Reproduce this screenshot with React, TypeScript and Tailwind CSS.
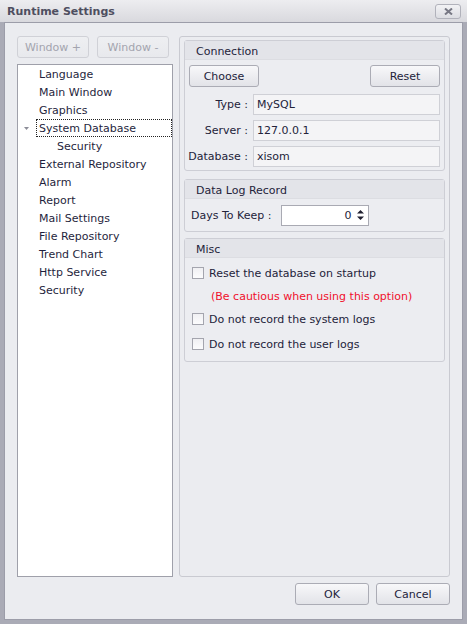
import type { ReactNode } from "react";

const font = { fontFamily: '"DejaVu Sans", "Liberation Sans", sans-serif' };

const treeItems: { label: string; depth: number; expanded?: boolean; focused?: boolean }[] = [
  { label: "Language", depth: 0 },
  { label: "Main Window", depth: 0 },
  { label: "Graphics", depth: 0 },
  { label: "System Database", depth: 0, expanded: true, focused: true },
  { label: "Security", depth: 1 },
  { label: "External Repository", depth: 0 },
  { label: "Alarm", depth: 0 },
  { label: "Report", depth: 0 },
  { label: "Mail Settings", depth: 0 },
  { label: "File Repository", depth: 0 },
  { label: "Trend Chart", depth: 0 },
  { label: "Http Service", depth: 0 },
  { label: "Security", depth: 0 },
];

function Btn({ children, disabled, className = "" }: { children: ReactNode; disabled?: boolean; className?: string }) {
  return (
    <button
      type="button"
      className={
        "flex h-[22px] items-center justify-center rounded-[3px] border bg-gradient-to-b pt-[1px] " +
        (disabled
          ? "border-[#d0d1d7] from-[#eeeff2] to-[#e8e9ed] text-[#a3a4ae] "
          : "border-[#abacb5] from-[#f8f8fa] to-[#e2e3e8] text-[#23233a] ") +
        className
      }
    >
      {children}
    </button>
  );
}

function Group({ title, children, className = "" }: { title: string; children: ReactNode; className?: string }) {
  return (
    <div className={"rounded-[3px] border border-[#cdced5] bg-[#ecedf1] " + className}>
      <div className="flex h-[19px] items-center border-b border-[#dcdde2] bg-[#e3e4e9] pl-[11px] pt-[2px] text-[#23233a]">
        {title}
      </div>
      {children}
    </div>
  );
}

function Field({ label, value }: { label: string; value: string }) {
  return (
    <div className="flex h-[21px] items-center pt-[1px]">
      <span className="flex w-[64px] flex-none justify-end whitespace-nowrap pr-[5px] text-[#23233a]">{label}</span>
      <div className="flex h-[21px] flex-1 items-center border border-[#cfd0d6] bg-[#f4f4f6] pl-[3px] pt-[1px] text-[#23233a]">
        {value}
      </div>
    </div>
  );
}

function Check({ label }: { label: string }) {
  return (
    <div className="flex h-[18px] items-center">
      <span className="ml-[3px] h-[12px] w-[12px] border border-[#a4a5ae] bg-gradient-to-b from-[#f0f0f3] to-[#fcfcfd]" />
      <span className="ml-[5px] pt-[1px] text-[#23233a]">{label}</span>
    </div>
  );
}

export default function App() {
  return (
    <div style={font} className="flex h-[624px] w-[467px] flex-col bg-[#aaabb6] text-[11px] leading-none">
      {/* caption */}
      <div className="flex h-[22px] items-center justify-between bg-gradient-to-b from-[#ededf0] to-[#d9d9de] pl-[7px] pr-[6px]">
        <span className="pt-[1px] text-[11px] font-bold text-[#4e4e60]">Runtime Settings</span>
        <div className="mt-[1px] flex h-[15px] w-[26px] items-center justify-center rounded-[3px] border border-[#b1b2bb] bg-gradient-to-b from-[#f2f2f5] to-[#dcdde2]">
          <svg width="9" height="7" viewBox="0 0 9 7">
            <path d="M1 0.5 L8 6.5 M8 0.5 L1 6.5" stroke="#777884" strokeWidth="2" />
          </svg>
        </div>
      </div>

      {/* client area */}
      <div className="mx-[4px] mb-[4px] flex flex-1 flex-col border border-[#9c9da9] bg-[#ebecf0] pl-[12px] pr-[12px] pt-[13px]">
        <div className="flex h-[541px] gap-[6px]">
          <div className="flex w-[156px] flex-col">
            <div className="flex gap-[8px]">
              <Btn disabled className="w-[72px]">Window +</Btn>
              <Btn disabled className="w-[72px]">Window -</Btn>
            </div>
            <div className="mt-[6px] flex-1 border border-[#9fa0aa] bg-white">
              {treeItems.map((it, i) => (
                <div key={i} className="relative flex h-[18px] items-center">
                  {it.expanded && (
                    <svg className="absolute left-[6px] top-[8px]" width="5" height="3" viewBox="0 0 5 3">
                      <path d="M0 0 H5 L2.5 3 Z" fill="#8c8d98" />
                    </svg>
                  )}
                  <span
                    className={
                      "flex h-[18px] items-center pt-[1px] text-[#1f1f3d] " +
                      (it.focused
                        ? "ml-[18px] w-[137px] border border-dotted border-[#222] pl-[2px]"
                        : it.depth === 1
                          ? "ml-[39px]"
                          : "ml-[21px]")
                    }
                  >
                    {it.label}
                  </span>
                </div>
              ))}
            </div>
          </div>

          <div className="flex flex-1 flex-col rounded-[3px] border border-[#c9cad1] px-[4px] pb-[4px] pt-[3px]">
            <Group title="Connection">
              <div className="flex flex-col px-[4px] pb-[4px] pt-[5px]">
                <div className="flex justify-between">
                  <Btn className="w-[70px]">Choose</Btn>
                  <Btn className="w-[70px]">Reset</Btn>
                </div>
                <div className="mt-[6px] flex flex-col gap-[5px]">
                  <Field label="Type :" value="MySQL" />
                  <Field label="Server :" value="127.0.0.1" />
                  <Field label="Database :" value="xisom" />
                </div>
              </div>
            </Group>

            <Group title="Data Log Record" className="mt-[8px]">
              <div className="flex h-[32px] items-center px-[6px]">
                <span className="pt-[1px] text-[#23233a]">Days To Keep :</span>
                <div className="ml-[10px] flex h-[21px] w-[88px] items-center justify-end border border-[#a9aab3] bg-white pr-[4px]">
                  <span className="pt-[1px] text-[#23233a]">0</span>
                  <svg className="ml-[6px]" width="7" height="12" viewBox="0 0 7 12">
                    <path d="M3.5 1 L7 4.5 H0 Z M0 7.5 H7 L3.5 11 Z" fill="#1f1f2f" />
                  </svg>
                </div>
              </div>
            </Group>

            <Group title="Misc" className="mt-[6px]">
              <div className="flex flex-col px-[4px] pb-[8px] pt-[6px]">
                <Check label="Reset the database on startup" />
                <div className="ml-[22px] mt-[5px] flex h-[18px] items-center pt-[1px] text-[#f0102c]">
                  (Be cautious when using this option)
                </div>
                <div className="mt-[5px]">
                  <Check label="Do not record the system logs" />
                </div>
                <div className="mt-[7px]">
                  <Check label="Do not record the user logs" />
                </div>
              </div>
            </Group>
          </div>
        </div>

        <div className="mt-[6px] flex justify-end gap-[7px]">
          <Btn className="w-[74px]">OK</Btn>
          <Btn className="w-[74px]">Cancel</Btn>
        </div>
      </div>
    </div>
  );
}
